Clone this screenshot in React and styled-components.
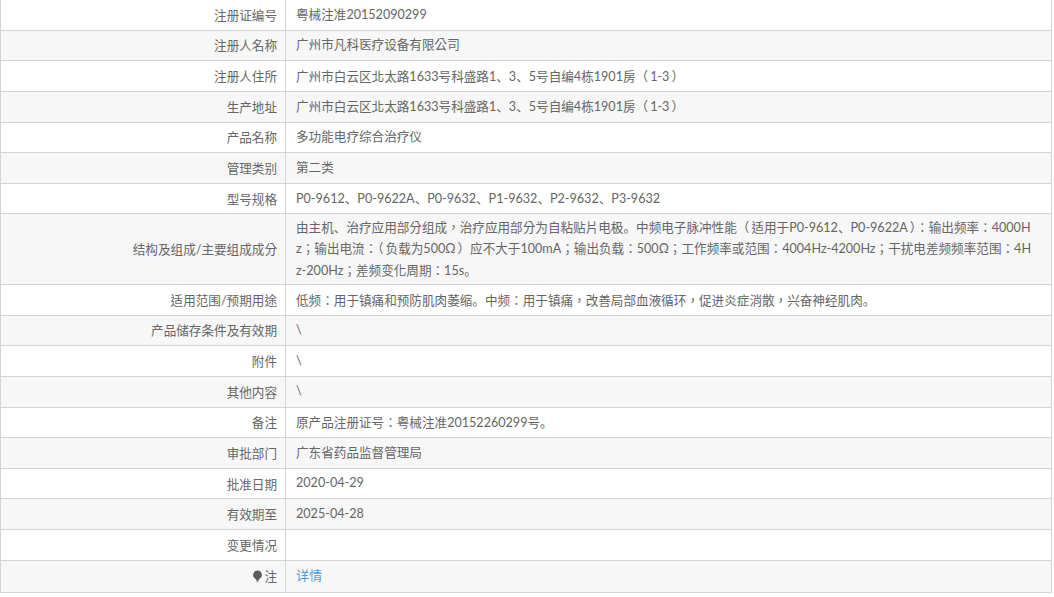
import React from "react";
import styled, { createGlobalStyle } from "styled-components";

const GlobalStyle = createGlobalStyle`
  html, body {
    margin: 0;
    background: #fff;
    overflow: hidden;
  }
  body {
    font-family: Lato, "Noto Sans CJK TC", sans-serif;
    font-size: 12.6px;
    color: #666;
  }
`;

const rows = [
  ["注册证编号", "粤械注准20152090299"],
  ["注册人名称", "广州市凡科医疗设备有限公司"],
  ["注册人住所", "广州市白云区北太路1633号科盛路1、3、5号自编4栋1901房（1-3）"],
  ["生产地址", "广州市白云区北太路1633号科盛路1、3、5号自编4栋1901房（1-3）"],
  ["产品名称", "多功能电疗综合治疗仪"],
  ["管理类别", "第二类"],
  ["型号规格", "P0-9612、P0-9622A、P0-9632、P1-9632、P2-9632、P3-9632"],
  [
    "结构及组成/主要组成成分",
    [
      "由主机、治疗应用部分组成，治疗应用部分为自粘贴片电极。中频电子脉冲性能（适用于P0-9612、P0-9622A）：输出频率：4000H",
      "z；输出电流：（负载为500Ω）应不大于100mA；输出负载：500Ω；工作频率或范围：4004Hz-4200Hz；干扰电差频频率范围：4H",
      "z-200Hz；差频变化周期：15s。",
    ],
  ],
  ["适用范围/预期用途", "低频：用于镇痛和预防肌肉萎缩。中频：用于镇痛，改善局部血液循环，促进炎症消散，兴奋神经肌肉。"],
  ["产品储存条件及有效期", "\\"],
  ["附件", "\\"],
  ["其他内容", "\\"],
  ["备注", "原产品注册证号：粤械注准20152260299号。"],
  ["审批部门", "广东省药品监督管理局"],
  ["批准日期", "2020-04-29"],
  ["有效期至", "2025-04-28"],
  ["变更情况", ""],
];

// the source font sets these marks differently from the rest of the punctuation
const renderText = (text) =>
  text.split(/([、。（）])/).map((part, i) => {
    if (part === "、" || part === "。") return <Mark key={i}>{part}</Mark>;
    if (part === "（") return <OpenParen key={i}>{part}</OpenParen>;
    if (part === "）") return <CloseParen key={i}>{part}</CloseParen>;
    return part;
  });

const BulbIcon = () => (
  <Bulb viewBox="0 0 12 13" aria-hidden="true">
    <path d="M6 .5a4.8 4.8 0 0 0-2.6 8.8c.7.5 1 1 1.1 1.7h3c.1-.7.4-1.2 1.1-1.7A4.8 4.8 0 0 0 6 .5z" fill="#5c5c5c" />
    <rect x="4.8" y="11.4" width="2.4" height="1.2" fill="#5c5c5c" />
  </Bulb>
);

const toLines = (value) => (Array.isArray(value) ? value : [value]);

export default function App() {
  return (
    <>
      <GlobalStyle />
      <Table>
        {rows.map(([label, value], i) => (
          <Row key={label} $odd={i % 2 === 1}>
            <Label>{label}</Label>
            <Value>
              {toLines(value).map((line, n) => (
                <Line key={n}>{renderText(line)}</Line>
              ))}
            </Value>
          </Row>
        ))}
        <Row $odd $last>
          <Label>
            <BulbIcon />注
          </Label>
          <Value>
            <Line>
              <DetailLink href="#">详情</DetailLink>
            </Line>
          </Value>
        </Row>
      </Table>
    </>
  );
}

const Table = styled.div`
  width: 1052px;
  box-sizing: border-box;
  border-left: 1px solid #d4d4d4;
  border-right: 1px solid #d4d4d4;
`;
const Row = styled.div`
  display: grid;
  grid-template-columns: 285px 1fr;
  min-height: ${(p) => (p.$last ? "32px" : "30.65px")};
  box-sizing: border-box;
  border-bottom: 1.4px solid #d4d4d4;
  background: ${(p) => (p.$odd ? "#f7f7f7" : "#fff")};
`;
const Label = styled.div`
  display: flex;
  align-items: center;
  justify-content: flex-end;
  padding: 0 8px 1px;
  border-right: 1px solid #d4d4d4;
`;
const Value = styled.div`
  align-self: center;
  padding: 2px 10px 3px;
`;
const Line = styled.div`
  height: 21.5px;
  line-height: 21.5px;
  white-space: nowrap;
`;
const Mark = styled.span`
  font-family: "Noto Sans CJK SC", sans-serif;
`;
const OpenParen = styled.span`
  margin-right: 2px;
`;
const CloseParen = styled.span`
  margin-left: 2px;
`;
const DetailLink = styled.a`
  color: #4d9de0;
  text-decoration: none;
  font-size: 13px;
`;
const Bulb = styled.svg`
  width: 11px;
  height: 12px;
  margin-right: 1px;
`;
